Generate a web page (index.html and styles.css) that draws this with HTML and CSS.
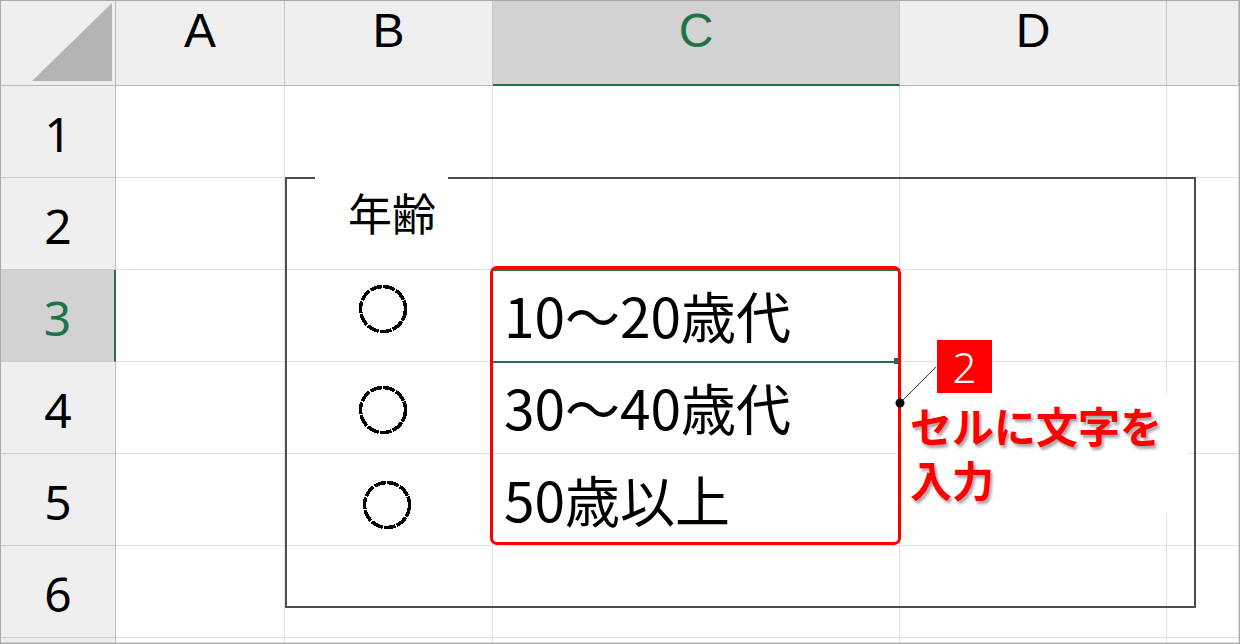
FILE: index.html
```html
<!DOCTYPE html>
<html lang="ja">
<head>
<meta charset="utf-8">
<title>Excel オプションボタン</title>
<link rel="stylesheet" href="styles.css">
</head>
<body>
<div class="sheet">
  <div class="grid">
    <div class="corner">
      <svg class="corner-tri" width="114" height="84" viewBox="0 0 114 84"><polygon points="31,80 111,80 111,2" fill="#b4b4b4"/></svg>
    </div>
    <div class="ch">A</div>
    <div class="ch">B</div>
    <div class="ch ch-sel">C</div>
    <div class="ch">D</div>
    <div class="ch"></div>

    <div class="rh">1</div>
    <div class="c"></div><div class="c"></div><div class="c"></div><div class="c"></div><div class="c"></div>

    <div class="rh">2</div>
    <div class="c"></div><div class="c"></div><div class="c"></div><div class="c"></div><div class="c"></div>

    <div class="rh rh-sel">3</div>
    <div class="c"></div>
    <div class="c c-opt opt-3"><svg class="radio" width="50" height="50" viewBox="0 0 50 50"><circle cx="25" cy="25" r="22.5"/></svg></div>
    <div class="c c-text">10～20歳代</div>
    <div class="c"></div><div class="c"></div>

    <div class="rh">4</div>
    <div class="c"></div>
    <div class="c c-opt opt-4"><svg class="radio" width="50" height="50" viewBox="0 0 50 50"><circle cx="25" cy="25" r="22.5"/></svg></div>
    <div class="c c-text">30～40歳代</div>
    <div class="c"></div><div class="c"></div>

    <div class="rh">5</div>
    <div class="c"></div>
    <div class="c c-opt opt-5"><svg class="radio" width="50" height="50" viewBox="0 0 50 50"><circle cx="25" cy="25" r="22.5"/></svg></div>
    <div class="c c-text">50歳以上</div>
    <div class="c"></div><div class="c"></div>

    <div class="rh">6</div>
    <div class="c"></div><div class="c"></div><div class="c"></div><div class="c"></div><div class="c"></div>

    <div class="rh"></div>
    <div class="c"></div><div class="c"></div><div class="c"></div><div class="c"></div><div class="c"></div>
  </div>

  <div class="groupbox">
    <div class="group-label">年齢</div>
  </div>

  <div class="selection"></div>
  <div class="fill-handle"></div>

  <div class="note">セルに文字を入力</div>
  <div class="highlight"></div>
  <div class="badge">2</div>
  <svg class="leader" width="60" height="60" viewBox="0 0 60 60">
    <line x1="44" y1="27" x2="8" y2="63" stroke="#333" stroke-width="1"/>
    <circle cx="8" cy="63" r="4.5" fill="#000"/>
  </svg>
</div>
</body>
</html>
```

FILE: styles.css
```css
* { box-sizing: border-box; }

html, body {
  margin: 0;
  padding: 0;
  background: #ffffff;
}

.sheet {
  position: relative;
  width: 1240px;
  height: 644px;
  border: 1px solid #a9a9a9;
  overflow: hidden;
  font-family: "Noto Sans CJK JP", "Noto Sans", sans-serif;
  color: #000;
}

.grid {
  display: grid;
  grid-template-columns: 115px 169px 208px 407px 267px 1fr;
  grid-template-rows: 85px repeat(6, 92px) 1fr;
  height: 100%;
}

.corner {
  background: #efefef;
  border-right: 1px solid #b8b8b8;
  border-bottom: 1px solid #b8b8b8;
  overflow: hidden;
}

.corner-tri { display: block; }

.ch {
  background: #efefef;
  border-right: 1px solid #c6c6c6;
  border-bottom: 1px solid #b8b8b8;
  display: flex;
  justify-content: center;
  align-items: flex-start;
  padding-top: 2px;
  font-family: "Liberation Sans", Arial, sans-serif;
  font-size: 48px;
  line-height: normal;
  color: #000;
}

.ch-sel {
  background: #d2d2d2;
  border-bottom: 2px solid #217346;
  color: #217346;
}

.rh {
  background: #efefef;
  border-right: 1px solid #b8b8b8;
  border-bottom: 1px solid #cccccc;
  display: flex;
  justify-content: center;
  align-items: center;
  font-family: "Noto Sans", "Open Sans", sans-serif;
  font-size: 48px;
  line-height: 66px;
  padding-top: 4px;
}

.rh-sel {
  background: #d2d2d2;
  border-right: 2px solid #217346;
  color: #217346;
}

.c {
  border-right: 1px solid #e1e1e1;
  border-bottom: 1px solid #e1e1e1;
  background: #fff;
}

.c-text {
  display: flex;
  align-items: center;
  padding-left: 11px;
  padding-bottom: 3px;
  font-size: 55px;
  line-height: 80px;
  white-space: nowrap;
}

.c-opt {
  display: flex;
  align-items: flex-start;
}

.opt-3 { padding: 14px 0 0 73px; }
.opt-4 { padding: 23px 0 0 73px; }
.opt-5 { padding: 26px 0 0 77px; }

.radio {
  display: block;
  fill: none;
}

.radio circle {
  stroke: #000;
  stroke-width: 3.5;
  stroke-dasharray: 12 1.2;
  shape-rendering: crispEdges;
}

.groupbox {
  position: absolute;
  left: 284px;
  top: 176px;
  width: 911px;
  height: 431px;
  border: 2px solid #4d4d4d;
}

.group-label {
  position: absolute;
  left: 28px;
  top: -2px;
  width: 133px;
  background: #fff;
  padding: 13px 0 6px 33px;
  font-size: 44px;
  line-height: 44px;
  white-space: nowrap;
}

.selection {
  position: absolute;
  left: 490px;
  top: 268px;
  width: 409px;
  height: 94px;
  border: 2px solid #217346;
}

.fill-handle {
  position: absolute;
  left: 893px;
  top: 357px;
  width: 6px;
  height: 6px;
  background: #217346;
}

.highlight {
  position: absolute;
  left: 489px;
  top: 265px;
  width: 411px;
  height: 279px;
  border: 3px solid #ff0000;
  border-radius: 7px;
}

.note {
  position: absolute;
  left: 900px;
  top: 392px;
  width: 287px;
  height: 120px;
  background: #fff;
  padding: 5px 6px 0 9px;
  font-size: 42px;
  line-height: 54px;
  font-weight: 700;
  color: #ff0000;
  text-shadow: 2px 3px 3px rgba(0, 0, 0, 0.35);
}

.badge {
  position: absolute;
  left: 936px;
  top: 339px;
  width: 55px;
  height: 53px;
  background: #ff0000;
  color: #fff;
  display: flex;
  justify-content: center;
  align-items: center;
  font-family: "Noto Sans", sans-serif;
  font-size: 42px;
  line-height: 60px;
  font-weight: 300;
}

.leader {
  position: absolute;
  left: 891px;
  top: 339px;
  overflow: visible;
}
```
